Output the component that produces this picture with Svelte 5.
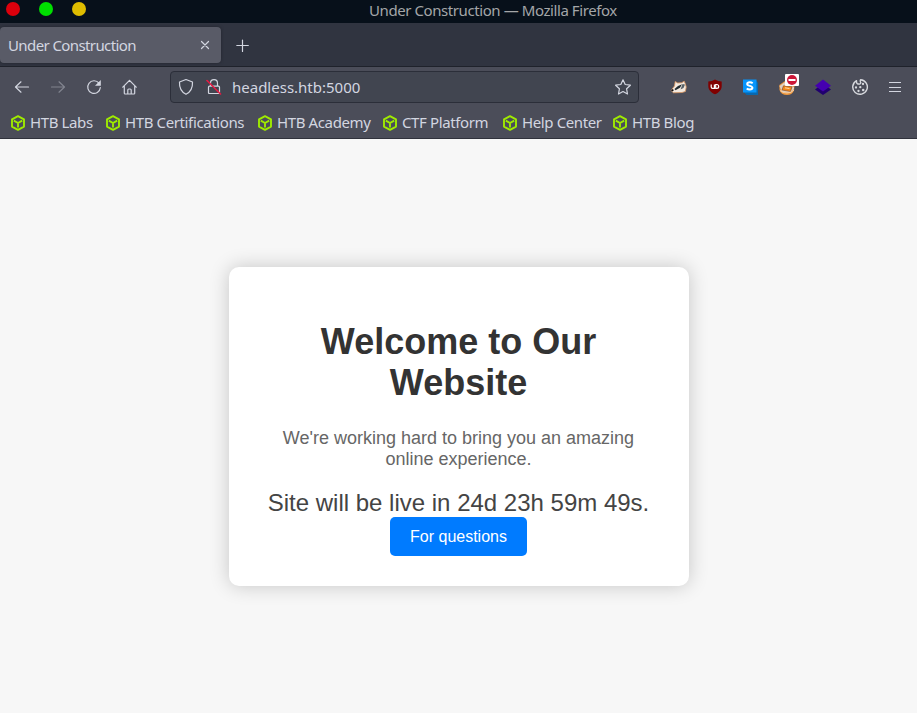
<script>
  const bookmarks = [
    { label: 'HTB Labs', width: 95 },
    { label: 'HTB Certifications', width: 152 },
    { label: 'HTB Academy', width: 125 },
    { label: 'CTF Platform', width: 120 },
    { label: 'Help Center', width: 110 },
    { label: 'HTB Blog', width: 90 }
  ];
</script>

<div class="window">
  <div class="titlebar">
    <div class="lights"><i class="red"></i><i class="green"></i><i class="yellow"></i></div>
    <span class="wtitle">Under Construction — Mozilla Firefox</span>
  </div>

  <div class="tabs">
    <div class="tab">
      <span>Under Construction</span>
      <svg width="10" height="10" viewBox="0 0 10 10"><path d="M1.500 1.500l7 7M8.500 1.500l-7 7" /></svg>
    </div>
    <svg class="plus" width="14" height="14" viewBox="0 0 14 14"><path d="M6.500 1v11.500M.8 6.500h11.500" /></svg>
  </div>

  <div class="nav">
    <div class="buttons">
      <svg width="16" height="16" viewBox="0 0 16 16"><path d="M14.500 8H1.500M7 2.800L1.500 8 7 13.200" /></svg>
      <svg class="dim" width="16" height="16" viewBox="0 0 16 16"><path d="M1.500 8h13M9 2.800L14.500 8 9 13.200" /></svg>
      <svg width="16" height="16" viewBox="0 0 16 16"><path d="M13 4.200A6.300 6.300 0 1 0 14.300 8.700" /><path d="M14.800 1v5.800H9z" class="solid" /></svg>
      <svg width="16" height="16" viewBox="0 0 16 16"><path d="M.8 8.200L7.500 1.300l6.700 6.900M2.300 7v7.200q0 .8.8.8h8.800q.8 0 .8-.8V7M5.800 15v-4q0-1 1-1h1.400q1 0 1 1v4" /></svg>
    </div>
    <div class="url">
      <svg class="shield" width="16" height="18" viewBox="0 0 16 18"><path d="M8 1.500L14.500 4c.3 6-1.500 9.800-6.500 12.300C3 13.800 1.200 10 1.500 4z" /></svg>
      <svg class="lock" width="16" height="18" viewBox="0 0 16 18">
        <path d="M4.500 8V5.200a3.500 3.500 0 0 1 7 0V8M3.500 8.200h9q1 0 1 1v5.300q0 1-1 1h-9q-1 0-1-1V9.200q0-1 1-1z" />
        <path d="M1 2.500L14.500 16" class="slash" />
      </svg>
      <span>headless.htb:5000</span>
      <svg class="star" width="18" height="18" viewBox="0 0 18 18"><path d="M9 1.800l2.200 4.700 5.200.7-3.800 3.600.9 5.200L9 13.500 4.500 16l.9-5.200L1.600 7.200l5.200-.7z" /></svg>
    </div>
    <div class="exts">
      <svg width="18" height="18" viewBox="0 0 18 18">
        <path d="M1 12.500L4.500 8 5.200 3.500l2.500 1.500 4-.3 2.500-1.500 1.200 2.800.8 3-.8 4.500L12 14.500 3.500 14.800z" fill="#f3e9df" stroke="#d9965f" stroke-width=".8" />
        <path d="M4.500 11L8 8l4-1.800-2 3.600-4.500 2.400z" fill="#222b30" />
        <path d="M12.500 6l2.500.5-1.500 3.500-3 1.500z" fill="#59636a" />
        <path d="M1 12l2-1 .8 1.600-1.800.8z" fill="#0b0d10" />
      </svg>
      <svg width="16" height="18" viewBox="0 0 16 18">
        <path d="M8 1.500Q11 3.500 14.700 3.500V8c0 4-3 6.700-6.700 8.300C4.300 14.700 1.300 12 1.300 8V3.500Q5 3.500 8 1.500z" fill="#800000" />
        <path d="M4.200 6.500v2.400q0 1.400 1.400 1.400H7.400V6.500M8.700 6.500v3.800h1.100a1.900 1.900 0 0 0 0-3.800z" fill="none" stroke="#fff" stroke-width="1.200" />
      </svg>
      <svg width="18" height="18" viewBox="0 0 18 18">
        <path d="M3 14L15 2.500l2 2V17H5.500z" fill="#0968ae" /><path d="M2 1.500h13.500v13H2z" fill="#0795fb" />
        <path d="M11.700 5.200Q10.500 4.300 8.700 4.300q-2.500 0-2.500 1.700c0 2.400 5.200 1.300 5.200 3.800q0 1.700-2.600 1.700-1.900 0-3.100-1" fill="none" stroke="#fff" stroke-width="2" />
      </svg>
      <div class="fox">
        <svg width="18" height="18" viewBox="0 0 18 18">
          <path d="M1.300 7L7 3l9.500 5-.5 4.500q-2 4.500-7 4.500-6 0-7.500-5z" fill="#ee963c" />
          <path d="M1.500 8L7 4l3 3 6 2v2l-4 4-8-1z" fill="#e0d0c0" />
          <path d="M5.500 7.800l8.500 1-1.500 4.700-8.500-1.500z" fill="#f58a1d" stroke="#79401d" stroke-width=".6" />
          <path d="M7 9.800l4.500.8" stroke="#ffd9a8" stroke-width="1" fill="none" />
          <path d="M2 12.500q2.500 2.500 7 2.500t7-3" stroke="#f5cda0" stroke-width="1" fill="none" />
        </svg>
        <svg class="badge" width="14" height="12" viewBox="0 0 14 12"><rect width="14" height="12" rx="1" fill="#fff" /><circle cx="7" cy="6" r="5" fill="#cc1638" /><path d="M3.500 6h7" stroke="#fff" stroke-width="2" /></svg>
      </div>
      <svg width="18" height="18" viewBox="0 0 18 18"><path d="M1 11.500L9 5.500l8 6-8 5.500z" fill="#20006f" /><path d="M1 7.800L9 1.500l8 6.300-8 5.700z" fill="#4500b0" /></svg>
      <svg width="18" height="18" viewBox="0 0 18 18">
        <path d="M5.500 2.600A7.300 7.300 0 1 0 9.500 1.700q-.6 1.900.3 3-.4 1.800-2.300 1.300-2.100.3-2-3.400z" fill="none" stroke="#d6d8dd" stroke-width="1.400" stroke-linejoin="round" />
        <g fill="#d6d8dd"><circle cx="12" cy="6" r="1.150" /><circle cx="5" cy="9.500" r="1.150" /><circle cx="9.300" cy="9.200" r="1.150" /><circle cx="7.500" cy="13" r="1.150" /><circle cx="12.200" cy="12" r="1.250" /></g>
      </svg>
      <svg class="menu" width="14" height="12" viewBox="0 0 14 12"><path d="M1 1.500h12M1 6.500h12M1 10.500h12" stroke="#d3d6e0" stroke-width="1.200" /></svg>
    </div>
  </div>

  <div class="bookmarks">
    {#each bookmarks as b}
      <div class="bm" style:width="{b.width}px">
        <svg width="16" height="16" viewBox="0 0 16 16"><path d="M8 1.200l6 3.200v7.200l-6 3.200-6-3.200V4.400zM3.800 5.700L8 8l4.200-2.300M8 8v4.600" /></svg>
        <span>{b.label}</span>
      </div>
    {/each}
  </div>

  <main>
    <section class="card">
      <h1>Welcome to Our Website</h1>
      <p>We're working hard to bring you an amazing online experience.</p>
      <div class="countdown">Site will be live in 24d 23h 59m 49s.</div>
      <button>For questions</button>
    </section>
  </main>
</div>

<style>
  :global(body) { margin: 0; overflow: hidden; }
  .window { width: 917px; height: 713px; display: flex; flex-direction: column; overflow: hidden; font: 15px/20px "Noto Sans", sans-serif; color: #d3d6e0; white-space: nowrap; }
  svg { display: block; flex: none; }
  .titlebar { height: 23px; background: #07101a; display: grid; grid-template-columns: 369px 1fr; flex: none; }
  .lights { display: flex; gap: 19px; padding: 2px 0 0 6px; }
  .lights i { width: 14px; height: 14px; border-radius: 50%; }
  .red { background: #dc000c; }
  .green { background: #00df00; }
  .yellow { background: #dfbd00; }
  .wtitle { color: #a4a6a8; line-height: 20px; letter-spacing: -.42px; }
  .tabs { box-sizing: border-box; height: 44px; flex: none; background: #303440; border-bottom: 1px solid #1f222b; display: flex; align-items: center; }
  .tab { box-sizing: border-box; width: 221px; height: 36px; margin-top: 1px; border-radius: 4px; background: #595b67; display: flex; align-items: center; justify-content: space-between; padding: 0 11px 0 8px; box-shadow: 0 0 3px #20232c; }
  .tab span { letter-spacing: -.6px; padding-bottom: 1px; }
  .tab svg, .plus, .buttons svg, .url svg { fill: none; stroke: #d3d6e0; stroke-width: 1.200; stroke-linejoin: round; stroke-linecap: round; }
  .plus { margin-left: 15px; margin-top: 2px; }
  .nav { box-sizing: border-box; height: 41px; padding-bottom: 1px; flex: none; background: #4b4d59; display: flex; align-items: center; }
  .buttons { display: flex; gap: 20px; width: 156px; padding-left: 14px; }
  .buttons .dim { opacity: .4; }
  .buttons .solid { fill: #d3d6e0; stroke: none; }
  .url { box-sizing: border-box; width: 469px; height: 32px; border: 1px solid #2b2e39; border-radius: 4px; background: #414550; display: flex; align-items: center; padding: 0 6px 0 7px; }
  .url .lock { margin-left: 12px; }
  .url .slash { stroke: #e51a43; stroke-width: 1.600; }
  .url span { margin-left: 10px; flex: 1; padding-bottom: 1px; }
  .exts { display: flex; align-items: center; justify-content: space-between; width: 232px; margin-left: 31px; }
  .exts .menu { margin-left: 1px; }
  .fox { position: relative; }
  .badge { position: absolute; left: 7px; top: -4px; }
  .bookmarks { box-sizing: border-box; height: 31px; flex: none; background: #4b4d59; border-bottom: 1px solid #30323c; display: flex; padding-left: 10px; }
  .bm { display: flex; align-items: center; gap: 4px; letter-spacing: -.38px; }
  .bm span { padding-bottom: 2px; }
  .bm svg { fill: none; stroke: #9feb00; stroke-width: 1.900; stroke-linejoin: round; }
  main { flex: 1; background: #f7f7f7; display: flex; align-items: center; justify-content: center; font-family: "Liberation Sans", Arial, sans-serif; white-space: normal; }
  .card { box-sizing: border-box; width: 460px; height: 319px; padding: 30px; border-radius: 10px; background: #fff; box-shadow: 0 0 20px rgba(0, 0, 0, .2); text-align: center; }
  h1 { margin: 24px 0 25px; font-size: 36px; line-height: 41px; color: #333; }
  p { margin: 0 0 19px; font-size: 18px; line-height: 21px; color: #666; }
  .countdown { font-size: 24px; line-height: 28px; color: #444; white-space: nowrap; }
  button { display: block; margin: 0 auto; border: 0; border-radius: 5px; background: #007bff; color: #fff; font: 16px/19px "Liberation Sans", Arial, sans-serif; padding: 10px 20px; }
</style>
